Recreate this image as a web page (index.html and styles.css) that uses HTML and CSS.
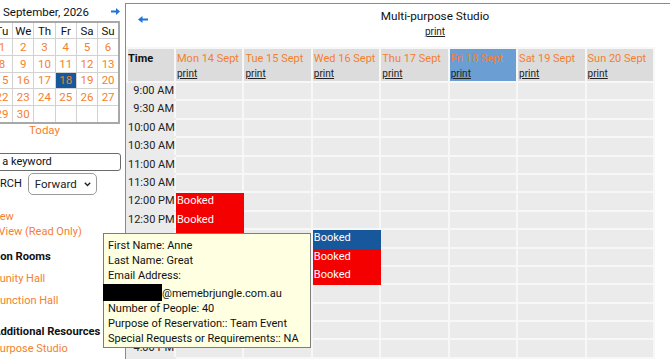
FILE: index.html
```html
<!DOCTYPE html>
<html lang="en">
<head>
  <meta charset="UTF-8">
  <title>Multi-purpose Studio - Bookings</title>
  <link rel="stylesheet" href="styles.css">
</head>
<body>
<div class="page">
  <aside class="sidebar">
    <div class="sidebar-inner">
      <div class="cal-head">
        <a class="cal-nav"><svg width="9" height="7" viewBox="0 0 9 7"><path d="M9 2.5H4V0L0 3.5 4 7V4.5h5z" fill="#1f74d6"/></svg></a>
        <span class="cal-title">September, 2026</span>
        <a class="cal-nav"><svg width="9" height="7" viewBox="0 0 9 7"><path d="M0 2.5h5V0l4 3.5L5 7V4.5H0z" fill="#1f74d6"/></svg></a>
      </div>
      <table class="cal-grid">
        <tr><th>Mo</th><th>Tu</th><th>We</th><th>Th</th><th>Fr</th><th>Sa</th><th>Su</th></tr>
        <tr><td></td><td>1</td><td>2</td><td>3</td><td>4</td><td>5</td><td>6</td></tr>
        <tr><td>7</td><td>8</td><td>9</td><td>10</td><td>11</td><td>12</td><td>13</td></tr>
        <tr><td>14</td><td>15</td><td>16</td><td>17</td><td class="sel">18</td><td>19</td><td>20</td></tr>
        <tr><td>21</td><td>22</td><td>23</td><td>24</td><td>25</td><td>26</td><td>27</td></tr>
        <tr><td>28</td><td>29</td><td>30</td><td></td><td></td><td></td><td></td></tr>
      </table>
      <a class="today">Today</a>

      <input class="search-box" type="text" value="Enter a keyword">
      <div class="search-row">
        <span class="search-label">SEARCH</span>
        <span class="select-wrap">
          <select class="search-dir"><option>Forward</option><option>Backward</option></select>
          <svg class="chev" width="7" height="5" viewBox="0 0 7 5"><path d="M0.8 0.8L3.5 3.6 6.2 0.8" fill="none" stroke="#222" stroke-width="1.4"/></svg>
        </span>
      </div>

      <div class="views">
        <a class="side-link">Day View</a>
        <a class="side-link">Week View (Read Only)</a>
      </div>

      <h4 class="side-head">Function Rooms</h4>
      <a class="room-link">Community Hall</a>
      <a class="room-link room-link-b">Function Hall</a>

      <h4 class="side-head side-head-b">Additional Resources</h4>
      <a class="room-link room-link-c">Multi-purpose Studio</a>
    </div>
  </aside>

  <main class="panel">
    <div class="panel-head">
      <a class="back"><svg width="10" height="7" viewBox="0 0 10 7"><path d="M10 2.5H4.5V0L0 3.5 4.5 7V4.5H10z" fill="#1f74d6"/></svg></a>
      <div class="title-block">
        <div class="room-title">Multi-purpose Studio</div>
        <a class="print">print</a>
      </div>
    </div>

    <table class="week">
      <colgroup><col class="col-time"><col><col><col><col><col><col><col></colgroup>
      <tr class="head-row">
        <th class="time-head">Time</th>
        <th><div class="day">Mon 14 Sept</div><a class="print">print</a></th>
        <th><div class="day">Tue 15 Sept</div><a class="print">print</a></th>
        <th><div class="day">Wed 16 Sept</div><a class="print">print</a></th>
        <th><div class="day">Thu 17 Sept</div><a class="print">print</a></th>
        <th class="today-col"><div class="day">Fri 18 Sept</div><a class="print">print</a></th>
        <th><div class="day">Sat 19 Sept</div><a class="print">print</a></th>
        <th><div class="day">Sun 20 Sept</div><a class="print">print</a></th>
      </tr>
      <tr><td class="time">9:00 AM</td><td></td><td></td><td></td><td></td><td></td><td></td><td></td></tr>
      <tr><td class="time">9:30 AM</td><td></td><td></td><td></td><td></td><td></td><td></td><td></td></tr>
      <tr><td class="time">10:00 AM</td><td></td><td></td><td></td><td></td><td></td><td></td><td></td></tr>
      <tr><td class="time">10:30 AM</td><td></td><td></td><td></td><td></td><td></td><td></td><td></td></tr>
      <tr><td class="time">11:00 AM</td><td></td><td></td><td></td><td></td><td></td><td></td><td></td></tr>
      <tr><td class="time">11:30 AM</td><td></td><td></td><td></td><td></td><td></td><td></td><td></td></tr>
      <tr><td class="time">12:00 PM</td><td class="booked">Booked</td><td></td><td></td><td></td><td></td><td></td><td></td></tr>
      <tr><td class="time">12:30 PM</td><td class="booked">Booked</td><td></td><td></td><td></td><td></td><td></td><td></td></tr>
      <tr><td class="time">1:00 PM</td><td class="booked">Booked</td><td></td><td class="booked mine">Booked</td><td></td><td></td><td></td><td></td></tr>
      <tr><td class="time">1:30 PM</td><td class="booked">Booked</td><td></td><td class="booked">Booked</td><td></td><td></td><td></td><td></td></tr>
      <tr><td class="time">2:00 PM</td><td></td><td></td><td class="booked">Booked</td><td></td><td></td><td></td><td></td></tr>
      <tr><td class="time">2:30 PM</td><td></td><td></td><td></td><td></td><td></td><td></td><td></td></tr>
      <tr><td class="time">3:00 PM</td><td></td><td></td><td></td><td></td><td></td><td></td><td></td></tr>
      <tr><td class="time">3:30 PM</td><td></td><td></td><td></td><td></td><td></td><td></td><td></td></tr>
      <tr><td class="time">4:00 PM</td><td></td><td></td><td></td><td></td><td></td><td></td><td></td></tr>
      <tr><td class="time">4:30 PM</td><td></td><td></td><td></td><td></td><td></td><td></td><td></td></tr>
      <tr><td class="time">5:00 PM</td><td></td><td></td><td></td><td></td><td></td><td></td><td></td></tr>
    </table>
  </main>

  <div class="tip">
    <div>First Name: Anne</div>
    <div>Last Name: Great</div>
    <div>Email Address:</div>
    <div><span class="redact"></span>@memebrjungle.com.au</div>
    <div>Number of People: 40</div>
    <div>Purpose of Reservation:: Team Event</div>
    <div>Special Requests or Requirements:: NA</div>
  </div>
</div>
</body>
</html>
```

FILE: styles.css
```css
body {
  margin: 0;
  font-family: Roboto, "Noto Sans", sans-serif;
  font-size: 11px;
  color: #111;
  background: #fff;
}

a {
  cursor: pointer;
}

.page {
  position: relative;
  display: flex;
  height: 359px;
  overflow: hidden;
}

/* left column (scrolled a little to the right, so its left edge is cut) */

.sidebar {
  width: 125px;
  flex: none;
  overflow: hidden;
}

.sidebar-inner {
  margin-left: -31px;
  width: 152px;
}

.cal-head {
  display: flex;
  align-items: center;
  justify-content: space-between;
  height: 21px;
  padding: 2px 1px 0 3px;
  box-sizing: border-box;
}

.cal-nav {
  display: flex;
}

.cal-title {
  font-size: 11.5px;
}

.cal-grid {
  width: 151px;
  border-collapse: collapse;
  border: 2px solid #a8a8a8;
  table-layout: fixed;
}

.cal-grid th {
  height: 15px;
  font-weight: normal;
  font-size: 11.5px;
  border: 1px solid #d2d2d2;
  padding: 0;
}

.cal-grid td {
  height: 15.8px;
  padding: 0;
  text-align: center;
  color: #f47f30;
  border: 1px solid #d2d2d2;
  font-size: 11.5px;
}

.cal-grid td.sel {
  background: #17579b;
}

.today {
  display: block;
  width: 151px;
  text-align: center;
  color: #f47f30;
  font-size: 11.5px;
  margin-top: -1px;
}

.search-box {
  display: block;
  margin: 16px 0 0 2px;
  width: 150px;
  height: 18px;
  box-sizing: border-box;
  border: 1px solid #6b6b6b;
  border-radius: 3px;
  padding: 0 2px;
  font: 11px Roboto, sans-serif;
  color: #111;
}

.search-row {
  display: flex;
  align-items: center;
  margin-top: 2px;
  padding-left: 11px;
}

.search-label {
  margin-right: 6px;
}

.select-wrap {
  position: relative;
  display: flex;
}

.search-dir {
  appearance: none;
  -webkit-appearance: none;
  width: 69px;
  height: 22px;
  border: 1px solid #9a9a9a;
  border-radius: 5px;
  background: #fff;
  padding: 0 0 0 6px;
  font: 11.5px Roboto, sans-serif;
  color: #222;
}

.chev {
  position: absolute;
  right: 6px;
  top: 9px;
}

.views {
  margin-top: 14px;
}

.side-link {
  display: block;
  color: #f47f30;
  font-size: 11px;
  line-height: 15px;
}

.side-head {
  margin: 11px 0 0 0;
  font-size: 11.2px;
  line-height: 14px;
}

.side-head-b {
  margin-top: 17px;
  padding-left: 24px;
}

.room-link {
  display: block;
  color: #f47f30;
  font-size: 11px;
  line-height: 14px;
  margin-top: 8px;
  margin-left: -2px;
}

.room-link-b {
  margin-left: 25px;
}

.room-link-c {
  margin-top: 3px;
  margin-left: -3px;
}

/* main booking panel */

.panel {
  flex: 1;
  margin-top: 3px;
  border-top: 1px solid #8a8a8a;
  border-left: 1px solid #8a8a8a;
}

.panel-head {
  display: grid;
  grid-template-columns: 74px 1fr;
  height: 43px;
}

.back {
  padding: 9px 0 0 12px;
}

.title-block {
  text-align: center;
  padding-top: 5px;
}

.room-title {
  font-size: 11.75px;
  line-height: 14px;
}

.print {
  display: inline-block;
  margin-top: 2px;
  font-size: 10px;
  line-height: 14px;
  color: #222;
  text-decoration: underline;
}

.week {
  width: 529px;
  table-layout: fixed;
  border-collapse: collapse;
}

.col-time {
  width: 48px;
}

.week th,
.week td {
  border: 2px solid #f7f7f7;
  padding: 0 0 0 1px;
  text-align: left;
  vertical-align: top;
  white-space: nowrap;
  overflow: hidden;
}

.week th {
  background: #dcdcdc;
  height: 29px;
  font-weight: normal;
}

.week th.time-head {
  font-weight: bold;
  padding: 3px 0 0 0;
  font-size: 11px;
}

.week th.today-col {
  background: #6b9fd3;
}

.day {
  color: #f47f30;
  font-size: 11px;
  line-height: 14px;
  padding-top: 3px;
}

.week th .print {
  margin-top: 1px;
}

.week td {
  background: #ebebeb;
  height: 16.4px;
  line-height: 16px;
}

.week td.time {
  text-align: right;
  padding: 0;
  overflow: visible;
  color: #222;
  border-top-color: #ebebeb;
  border-bottom-color: #ebebeb;
  border-left-color: #ebebeb;
}

.week td.booked {
  background: #f50000;
  border-color: #f50000;
  color: #fff;
}

.week td.mine {
  background: #17589c;
  border-color: #17589c;
}

/* hover card for a booking */

.tip {
  position: absolute;
  left: 103px;
  top: 233px;
  width: 208px;
  height: 115px;
  box-sizing: border-box;
  padding: 4px 0 0 4px;
  background: #ffffe1;
  border: 1px solid #7d7d7d;
  font-size: 11px;
  line-height: 15.2px;
  color: #111;
}

.redact {
  display: inline-block;
  width: 59px;
  height: 17px;
  margin-left: -5px;
  vertical-align: -4px;
  background: #000;
}
```
